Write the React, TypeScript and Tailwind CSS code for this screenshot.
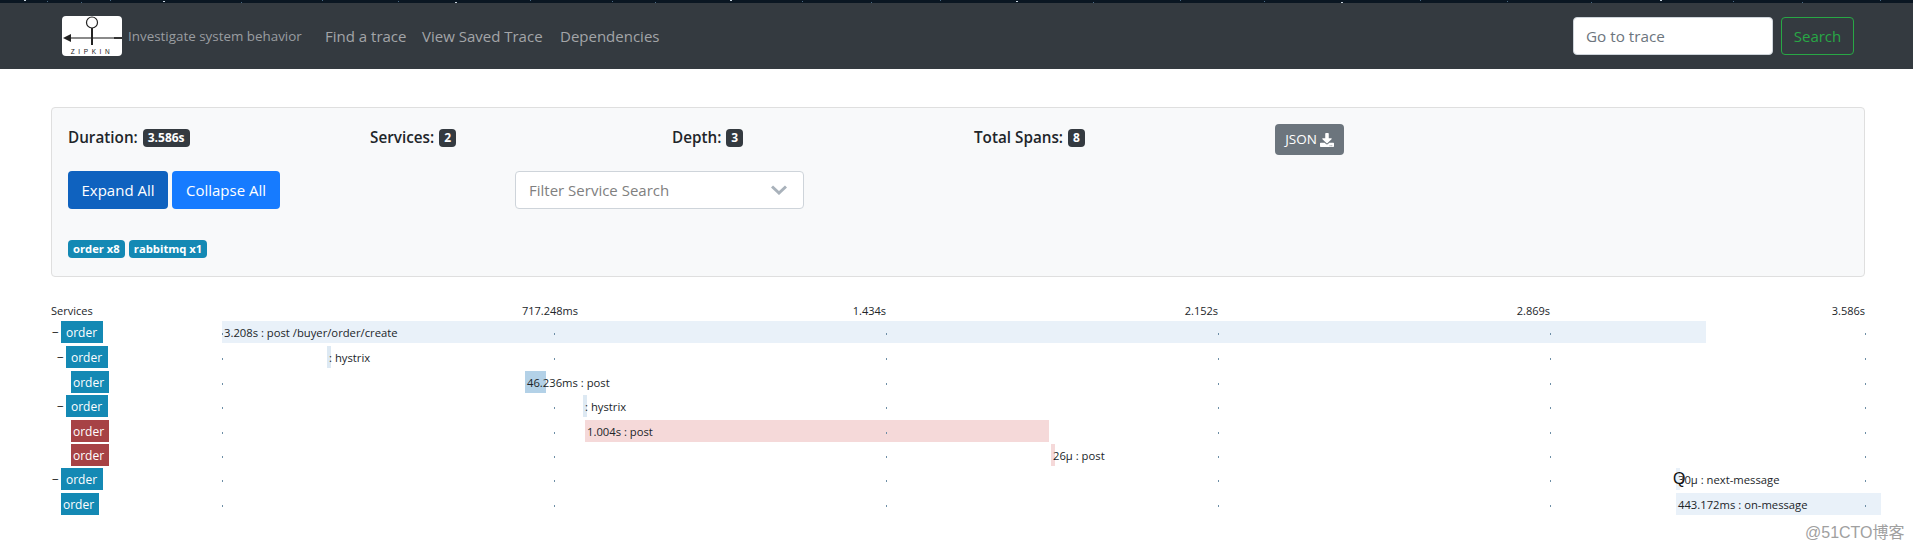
import React from "react";
import { FaDownload } from "react-icons/fa";

const fontStack = "font-['Open_Sans','Noto_Sans',sans-serif]";

// span rows - start is px from the start of the timeline (x=222)
const rows = [
  { depth: "pl-[1px]", toggle: true, box: "w-[42px] pl-[5px]", bg: "bg-[#1489b4]", h: "h-[25px]", start: 0, width: 1484, bar: "bg-[#e9f1f9]", text: "3.208s : post /buyer/order/create" },
  { depth: "pl-[6px]", toggle: true, box: "w-[42px] pl-[5px]", bg: "bg-[#1489b4]", h: "h-[25px]", start: 105, width: 4, bar: "bg-[#dde9f3]", text: ": hystrix" },
  { depth: "pl-[11px]", toggle: false, box: "w-[38px] pl-[2px]", bg: "bg-[#1489b4]", h: "h-[24px]", start: 303, width: 21, bar: "bg-[#b3d1e7]", text: "46.236ms : post" },
  { depth: "pl-[6px]", toggle: true, box: "w-[42px] pl-[5px]", bg: "bg-[#1489b4]", h: "h-[25px]", start: 361, width: 4, bar: "bg-[#dde9f3]", text: ": hystrix" },
  { depth: "pl-[11px]", toggle: false, box: "w-[38px] pl-[2px]", bg: "bg-[#a74245]", h: "h-[24px]", start: 363, width: 464, bar: "bg-[#f5d9d9]", text: "1.004s : post" },
  { depth: "pl-[11px]", toggle: false, box: "w-[38px] pl-[2px]", bg: "bg-[#a74245]", h: "h-[24px]", start: 829, width: 4, bar: "bg-[#f5d9d9]", text: "26μ : post" },
  { depth: "pl-[1px]", toggle: true, box: "w-[42px] pl-[5px]", bg: "bg-[#1489b4]", h: "h-[25px]", start: 1454, width: 4, bar: "bg-[#e9f1f9]", text: "30μ : next-message" },
  { depth: "pl-[1px]", toggle: false, box: "w-[38px] pl-[2px]", bg: "bg-[#1489b4]", h: "h-[24px]", start: 1454, width: 205, bar: "bg-[#e9f1f9]", text: "443.172ms : on-message" },
];

const tickDots = ["left-[0px]", "left-[332px]", "left-[664px]", "left-[996px]", "left-[1328px]", "left-[1643px]"];

// the page behind the header peeks out at the very top
const stars = [24, 47, 81, 110, 163, 241, 322, 398, 455, 530, 612, 655, 730, 802, 871, 940, 1016, 1093, 1180, 1264, 1341, 1420, 1507, 1591, 1660, 1733, 1802, 1880];

const Stat = ({ label, value }: { label: string; value: string }) => (
  <div className="flex h-[27px] items-center gap-[5px]">
    <span className="text-[15.25px] font-semibold text-[#212529]">{label}</span>
    <span className="h-[18px] rounded-[4px] bg-[#343a40] px-[5px] text-[12px] font-bold leading-[18px] text-white">
      {value}
    </span>
  </div>
);

const ZipkinLogo = () => (
  <svg width="60" height="40" viewBox="0 0 60 40" className="shrink-0">
    <rect width="60" height="40" rx="4" fill="#ffffff" />
    <line x1="8" y1="22" x2="60" y2="22" stroke="#8a8a8a" strokeWidth="2" />
    <line x1="52" y1="22" x2="60" y2="22" stroke="#333" strokeWidth="2" />
    <path d="M1 22 L9 18 L9 26 Z" fill="#222" />
    <ellipse cx="30" cy="6.5" rx="5.5" ry="5.5" fill="#fff" stroke="#222" strokeWidth="1.2" />
    <line x1="30" y1="12" x2="30" y2="29" stroke="#222" strokeWidth="2" />
    <text x="30" y="38" textAnchor="middle" fontSize="6.5" letterSpacing="3.6" fill="#222" fontFamily="Liberation Sans, sans-serif">
      ZIPKIN
    </text>
  </svg>
);

export default function App() {
  return (
    <div className={`relative h-[549px] w-[1913px] overflow-hidden bg-white ${fontStack}`}>
      <svg width="1913" height="3" className="block bg-[#0a1622]">
        {stars.map((x, i) => (
          <rect key={x} x={x} y={i % 3} width={i % 4 === 0 ? 2 : 1} height="1" fill={i % 4 === 0 ? "#c9d4de" : "#4b6a85"} />
        ))}
      </svg>
      <header className="flex h-[66px] items-center bg-[#343a40] pl-[62px]">
        <ZipkinLogo />
        <span className="ml-[6px] w-[197px] text-[13.4px] text-[#9a9da0]">Investigate system behavior</span>
        <nav className="flex text-[15px] text-[#a3a5a8]">
          <a className="w-[97px]">Find a trace</a>
          <a className="w-[138px]">View Saved Trace</a>
          <a>Dependencies</a>
        </nav>
        <div className="ml-auto mr-[59px] flex gap-[8px]">
          <div className="flex h-[38px] w-[200px] items-center rounded-[4px] border border-[#ced4da] bg-white pl-[12px] text-[15.25px] text-[#6c757d]">
            Go to trace
          </div>
          <button className="h-[38px] w-[73px] rounded-[4px] border border-[#28a745] text-[15px] text-[#28a745]">
            Search
          </button>
        </div>
      </header>

      <main className="pl-[51px] pr-[48px]">
        <section className="mt-[38px] h-[170px] rounded-[4px] border border-[#dfdfdf] bg-[#f8f9fa] pl-[16px] pt-[16px]">
          <div className="grid grid-cols-[302px_302px_302px_301px_auto] items-start">
            <Stat label="Duration:" value="3.586s" />
            <Stat label="Services:" value="2" />
            <Stat label="Depth:" value="3" />
            <Stat label="Total Spans:" value="8" />
            <button className="flex h-[31px] w-[69px] items-center justify-center gap-[3px] rounded-[4px] bg-[#6c757d] text-[13.5px] text-white">
              JSON <FaDownload className="h-[14px] w-[14px]" />
            </button>
          </div>
          <div className="mt-[16px] flex">
            <button className="h-[38px] w-[100px] rounded-[4px] bg-[#0f62bf] text-[15px] text-white">Expand All</button>
            <button className="ml-[4px] h-[38px] w-[108px] rounded-[4px] bg-[#167bff] text-[15px] text-white">Collapse All</button>
            <div className="ml-[235px] flex h-[38px] w-[289px] items-center justify-between rounded-[4px] border border-[#ced4da] bg-white pl-[13px] pr-[16px] text-[15px] text-[#808080]">
              <span>Filter Service Search</span>
              <svg width="16" height="10" viewBox="0 0 16 10" fill="none" stroke="#a9b2bb" strokeWidth="3">
                <path d="M1 1.5 L8 8 L15 1.5" />
              </svg>
            </div>
          </div>
          <div className="mt-[30px] flex gap-[4px] pt-[1px] text-[11.25px] font-bold leading-[18px] text-white">
            <span className="rounded-[4px] bg-[#1489b4] px-[5px]">order x8</span>
            <span className="rounded-[4px] bg-[#1489b4] px-[5px]">rabbitmq x1</span>
          </div>
        </section>

        <div className="mt-[26px] grid h-[18px] grid-cols-[171px_356px_308px_332px_332px_315px] text-[11px] leading-[16px] text-[#212529]">
          <span>Services</span>
          <span className="text-right">717.248ms</span>
          <span className="text-right">1.434s</span>
          <span className="text-right">2.152s</span>
          <span className="text-right">2.869s</span>
          <span className="text-right">3.586s</span>
        </div>

        <div>
          {rows.map((row, index) => (
            <div key={index} className={`flex ${row.h} leading-[23px]`}>
              <div className={`flex w-[171px] shrink-0 text-[12px] ${row.depth}`}>
                <span className="w-[9px] shrink-0 text-[#111]">{row.toggle ? "−" : ""}</span>
                <span className={`h-[22px] text-white ${row.box} ${row.bg}`}>order</span>
              </div>
              <div className="relative flex-1">
                {tickDots.map((dot) => (
                  <span key={dot} className={`absolute top-[12px] h-[2px] w-[1px] bg-[#6d8ea6] ${dot}`} />
                ))}
                <div
                  className={`h-[22px] whitespace-nowrap pl-[2px] text-[11.25px] text-[#212529] ${row.bar}`}
                  style={{ marginLeft: row.start, width: row.width }}
                >
                  {row.text}
                </div>
              </div>
            </div>
          ))}
        </div>
      </main>

      <span className="absolute left-[1673px] top-[467px] font-['Liberation_Sans',sans-serif] text-[16px] text-[#111]">Q</span>
      <span className="absolute left-[1805px] top-[521px] font-['Liberation_Sans','Noto_Sans_CJK_SC',sans-serif] text-[16px] text-[#a0a0a0]">
        @51CTO博客
      </span>
    </div>
  );
}
